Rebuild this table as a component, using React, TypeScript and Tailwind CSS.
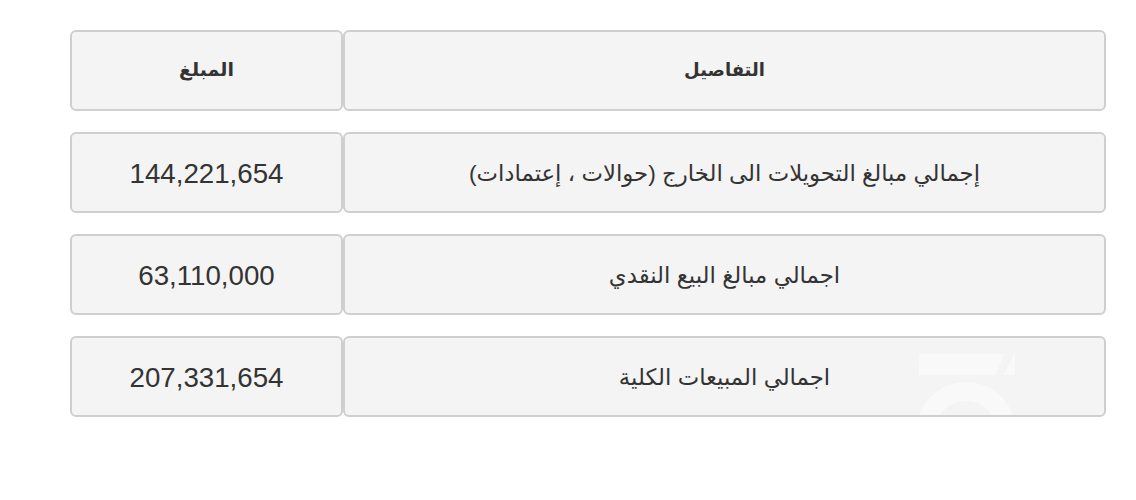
import React from "react";

const rows = [
  { d: "إجمالي مبالغ التحويلات الى الخارج (حوالات ، إعتمادات)", v: "144,221,654" },
  { d: "اجمالي مبالغ البيع النقدي", v: "63,110,000" },
  { d: "اجمالي المبيعات الكلية", v: "207,331,654" },
];

const cell =
  "h-[81px] flex items-center justify-center bg-[#f4f4f4] border-2 border-[#cfcfcf] rounded-[6px] text-[#333333] relative overflow-hidden";

export default function App() {
  return (
    <div
      className="w-[1136px] h-[500px] bg-white pt-[30px] pl-[70px]"
      style={{ fontFamily: '"Liberation Sans", Arial, "DejaVu Sans", sans-serif' }}
    >
      <div dir="rtl" className="w-[1036px] flex flex-col gap-[21px]">
        <div className="flex">
          <div className={`${cell} w-[763px] text-[18px] font-bold`}>التفاصيل</div>
          <div className={`${cell} w-[273px] text-[19px] font-bold`}>المبلغ</div>
        </div>
        {rows.map((r, i) => (
          <div key={i} className="flex">
            <div className={`${cell} w-[763px] text-[22.8px]`}>
              <span className="relative z-10 pt-[1px]">{r.d}</span>
              {i === rows.length - 1 && (
                <svg
                  className="absolute left-[572px] top-[14px]"
                  width="100"
                  height="70"
                  viewBox="0 0 100 70"
                >
                  <g fill="#ffffff" fillOpacity="0.45">
                    <polygon points="2,2 88,2 78,23 2,23" />
                    <polygon points="86,23 98,1 98,23" />
                    <path
                      fillRule="evenodd"
                      d="M49,30 A50,50 0 1,1 48.9,30 Z M49,49 A31,31 0 1,0 49.1,49 Z"
                    />
                  </g>
                </svg>
              )}
            </div>
            <div className={`${cell} w-[273px] text-[27.7px]`}>
              <span dir="ltr" className="pt-[3px]">{r.v}</span>
            </div>
          </div>
        ))}
      </div>
    </div>
  );
}
